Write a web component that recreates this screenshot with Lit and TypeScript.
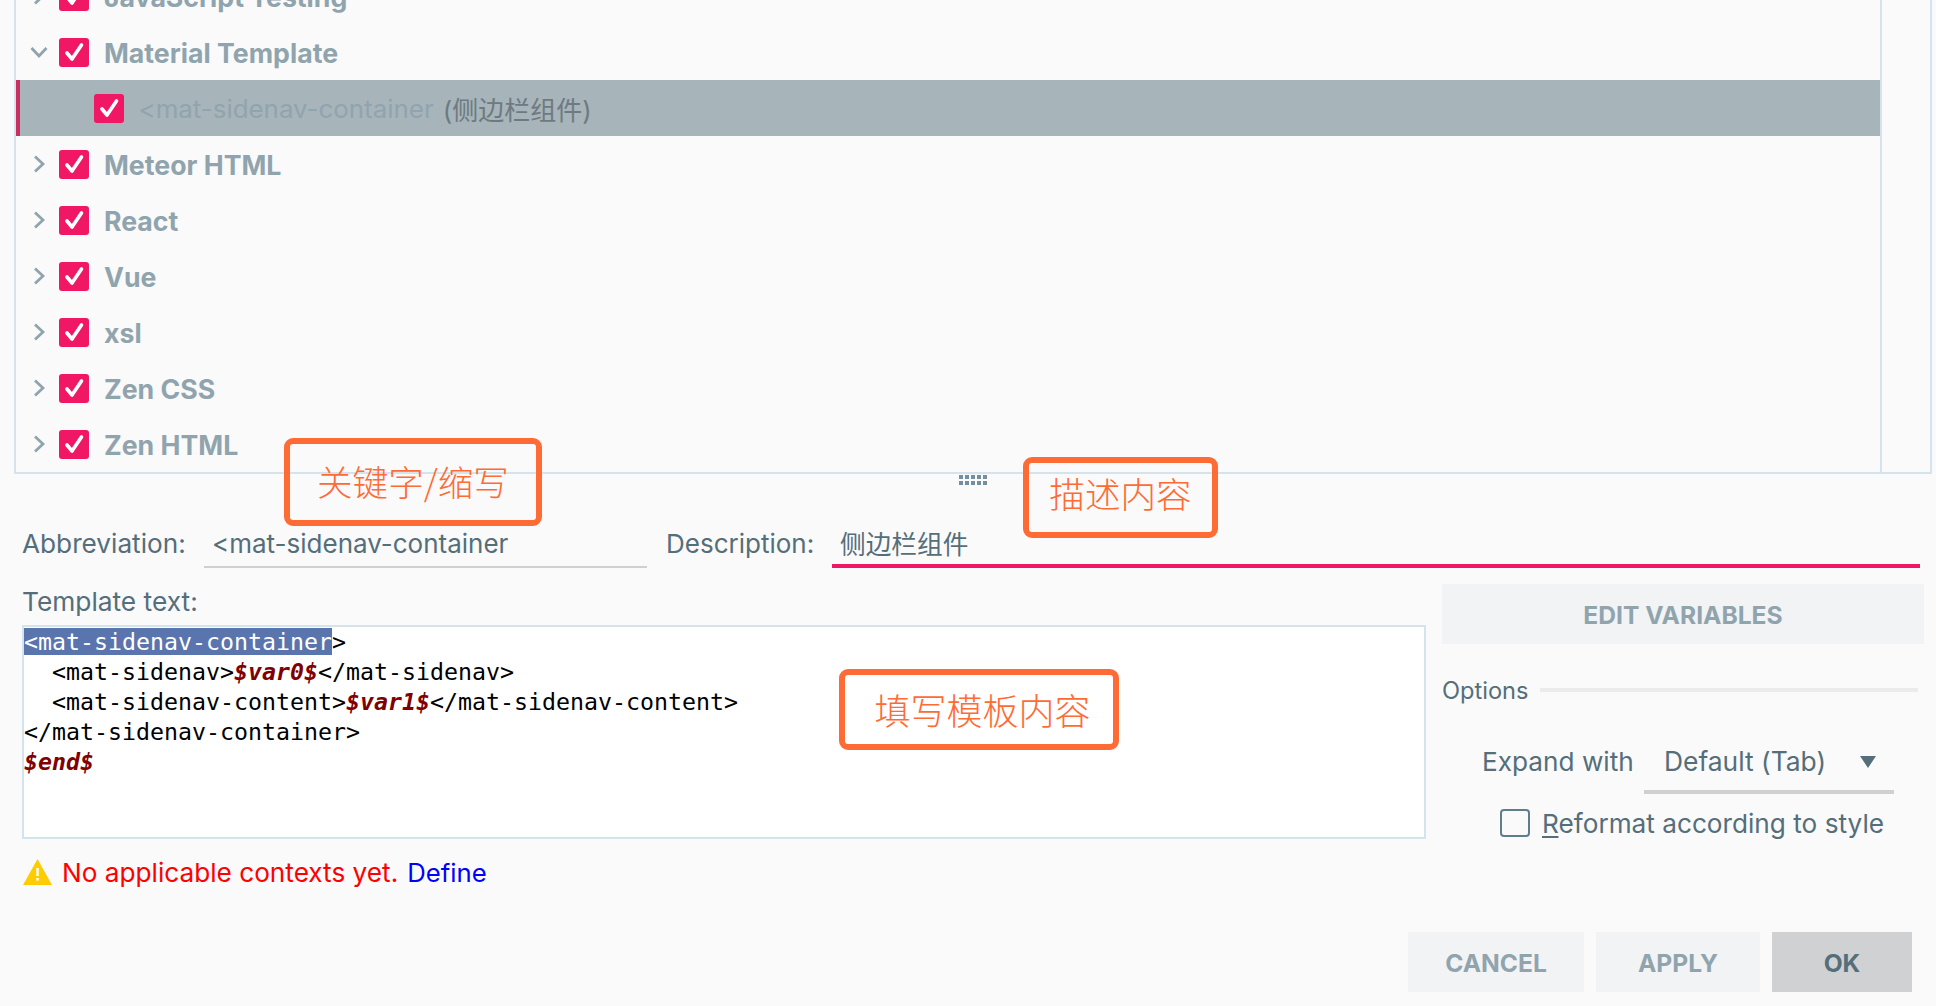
import { LitElement, html, css } from "lit";
import { customElement } from "lit/decorators.js";

const check = html`<svg class="cb" viewBox="0 0 30 29"><rect width="30" height="29" rx="3" fill="#f01864"/><path d="M8 15l5 6 9.5-14" fill="none" stroke="#fff" stroke-width="3.6" stroke-linecap="round" stroke-linejoin="round"/></svg>`;
const right = html`<svg class="chev" viewBox="0 0 18 18"><path d="M5 1.5l8 7.5-8 7.5" fill="none" stroke="#90a4ae" stroke-width="2.8"/></svg>`;
const down = html`<svg class="chev" viewBox="0 0 18 18"><path d="M1.5 5l7.5 8 7.5-8" fill="none" stroke="#90a4ae" stroke-width="2.8"/></svg>`;

const groups: [string, boolean][] = [
  ["JavaScript Testing", false],
  ["Material Template", true],
  ["Meteor HTML", false],
  ["React", false],
  ["Vue", false],
  ["xsl", false],
  ["Zen CSS", false],
  ["Zen HTML", false],
];

@customElement("app-root")
export class AppRoot extends LitElement {
  static styles = css`
    :host { display: block; width: 1936px; height: 1006px; overflow: hidden; }
    .page {
      position: relative; width: 1936px; height: 1006px; background: #fafafa; overflow: hidden;
      display: flex; flex-direction: column; box-sizing: border-box;
      font-family: Inter, "Noto Sans CJK SC", sans-serif; font-size: 26.2px; color: #546e7a;
    }
    .panel {
      flex: none; height: 474px; margin: 0 4px 0 14px; box-sizing: border-box;
      border: solid #d5e3ec; border-width: 0 2px 2px 2px; display: flex;
    }
    .tree {
      flex: 1; min-width: 0; height: 472px; overflow: hidden; display: flex; flex-direction: column;
      justify-content: flex-end; border-right: 2px solid #d5e3ec;
    }
    .row { flex: none; height: 56px; display: flex; align-items: center; padding-left: 14px; box-sizing: border-box; }
    .row .name { font-weight: 700; font-size: 26.7px; color: #90a4ae; margin-left: 15px; white-space: nowrap; padding-top: 1.5px; }
    .chev { width: 18px; height: 18px; flex: none; margin-right: 11px; }
    .cb { width: 30px; height: 29px; flex: none; }
    .sel { background: #a7b4ba; border-left: 4px solid #c9305f; padding-left: 74px; }
    .sel .abbr { color: #90a4ae; margin-left: 14.5px; font-size: 25.9px; white-space: nowrap; }
    .sel .desc { color: #6e7a80; margin-left: 9px; font-size: 26px; white-space: nowrap; }
    .scroll { width: 48px; flex: none; }
    .fields { display: flex; margin: 46px 16px 0 22px; height: 48px; align-items: stretch; flex: none; }
    .fields label { display: flex; align-items: center; white-space: nowrap; padding-bottom: 2px; box-sizing: border-box; }
    .lab1 { width: 182px; }
    .lab2 { width: 166px; margin-left: 19px; font-size: 26px; }
    .field {
      display: flex; align-items: center; box-sizing: border-box; padding: 1px 0 0 8px;
      border-bottom: 2px solid #d0d0d0; white-space: nowrap; font-size: 26px;
    }
    .f1 { width: 443px; }
    .f2 { flex: 1; border-bottom: 4px solid #f01864; font-size: 25.7px; }
    .body { display: flex; margin: 16px 12px 0 22px; flex: none; height: 304px; }
    .left { width: 1404px; flex: none; display: flex; flex-direction: column; }
    .tl { height: 41px; flex: none; display: flex; align-items: center; padding-bottom: 6px; box-sizing: border-box; font-size: 26.3px; }
    .code {
      height: 214px; box-sizing: border-box; flex: none; background: #fff; border: 2px solid #d5e3ec;
      font-family: "DejaVu Sans Mono", monospace; font-size: 23.25px; line-height: 30px; color: #000;
    }
    .code div { height: 30px; white-space: pre; }
    .hl { background: #5a74ad; color: #fff; }
    .v { color: #800000; font-weight: bold; font-style: italic; }
    .warn { display: flex; align-items: center; margin-top: 18px; height: 30px; padding-left: 1px; }
    .warn svg { width: 29px; height: 26px; flex: none; margin-right: 10px; }
    .red { color: #f00; }
    .blue { color: #00f; margin-left: 9px; font-size: 25.7px; }
    .right { width: 482px; margin-left: 16px; flex: none; display: flex; flex-direction: column; }
    .btn {
      display: flex; align-items: center; justify-content: center; background: #f2f3f5; color: #90a4ae;
      font-weight: 700; font-size: 24.6px; height: 60px; box-sizing: border-box; flex: none; padding-top: 2px;
    }
    .opts { display: flex; align-items: center; height: 30px; margin-top: 31px; font-size: 23.6px; }
    .opts i { flex: none; width: 378px; height: 4px; background: #ebebeb; margin-left: auto; margin-right: 6px; }
    .expand { display: flex; align-items: center; margin-top: 23px; padding-left: 40px; height: 66px; }
    .expand .lbl { width: 162px; flex: none; }
    .combo {
      width: 250px; align-self: stretch; box-sizing: border-box; flex: none; display: flex; align-items: center;
      padding: 4px 18px 0 20px; border-bottom: 4px solid #d0d0d0; justify-content: space-between; font-size: 26.4px;
    }
    .combo svg { width: 16px; height: 12px; margin-top: 2px; }
    .reformat { display: flex; align-items: center; margin-top: 14px; padding-left: 58px; height: 30px; white-space: nowrap; }
    .box {
      width: 30px; height: 28px; box-sizing: border-box; border: 2px solid #5f7e8b; border-radius: 4px; margin-right: 12px; flex: none;
    }
    .reformat u { text-decoration-thickness: 2px; text-underline-offset: 3px; }
    .foot { display: flex; justify-content: flex-end; gap: 12px; margin: 44px 24px 0 0; flex: none; }
    .b1 { width: 176px; } .b2 { width: 164px; }
    .foot .ok { width: 140px; background: #d0d1d3; color: #546e7a; }
    .note {
      position: absolute; box-sizing: border-box; border: 6px solid #ff6b35; border-radius: 9px; background: transparent;
      display: flex; align-items: center; justify-content: center; color: #ff6b35; font-size: 36px;
      font-family: "Noto Sans CJK SC", sans-serif; font-weight: 300; white-space: nowrap;
    }
    .n1 { left: 284px; top: 438px; width: 258px; height: 88px; font-size: 35.6px; padding-bottom: 3px; }
    .n2 { left: 1023px; top: 457px; width: 195px; height: 81px; font-size: 35.6px; padding-bottom: 10px; }
    .n3 { left: 839px; top: 669px; width: 280px; height: 81px; padding: 0 0 2px 7px; }
    .grip {
      position: absolute; left: 959px; top: 475px; display: grid; grid-template-columns: repeat(5, 4px);
      grid-auto-rows: 4px; gap: 2px;
    }
    .grip b { background: #7290a0; display: block; }
  `;

  render() {
    return html`<div class="page">
      <div class="panel">
        <div class="tree">
          ${groups.map(([n, open]) => html`
            <div class="row">${open ? down : right}${check}<span class="name">${n}</span></div>
            ${open ? html`<div class="row sel">${check}<span class="abbr">&lt;mat-sidenav-container</span><span class="desc">(侧边栏组件)</span></div>` : ""}
          `)}
        </div>
        <div class="scroll"></div>
      </div>
      <div class="fields">
        <label class="lab1">Abbreviation:</label>
        <div class="field f1">&lt;mat-sidenav-container</div>
        <label class="lab2">Description:</label>
        <div class="field f2">侧边栏组件</div>
      </div>
      <div class="body">
        <div class="left">
          <div class="tl">Template text:</div>
          <div class="code">
            <div><span class="hl">&lt;mat-sidenav-container</span>&gt;</div>
            <div>  &lt;mat-sidenav&gt;<span class="v">$var0$</span>&lt;/mat-sidenav&gt;</div>
            <div>  &lt;mat-sidenav-content&gt;<span class="v">$var1$</span>&lt;/mat-sidenav-content&gt;</div>
            <div>&lt;/mat-sidenav-container&gt;</div>
            <div><span class="v">$end$</span></div>
          </div>
          <div class="warn">
            <svg viewBox="0 0 29 26"><path d="M14.5 0L29 26H0z" fill="#ffcc00"/><rect x="13.3" y="9" width="2.4" height="8" fill="#fff"/><rect x="13.3" y="19" width="2.4" height="2.6" fill="#fff"/></svg>
            <span class="red">No applicable contexts yet.</span><span class="blue">Define</span>
          </div>
        </div>
        <div class="right">
          <div class="btn">EDIT VARIABLES</div>
          <div class="opts"><span>Options</span><i></i></div>
          <div class="expand">
            <span class="lbl">Expand with</span>
            <div class="combo"><span>Default (Tab)</span><svg viewBox="0 0 16 12"><path d="M0 0h16L8 12z" fill="#546e7a"/></svg></div>
          </div>
          <div class="reformat"><span class="box"></span><span><u>R</u>eformat according to style</span></div>
        </div>
      </div>
      <div class="foot">
        <div class="btn b1">CANCEL</div>
        <div class="btn b2">APPLY</div>
        <div class="btn ok">OK</div>
      </div>
      <div class="grip">${Array.from({ length: 10 }, () => html`<b></b>`)}</div>
      <div class="note n1">关键字/缩写</div>
      <div class="note n2">描述内容</div>
      <div class="note n3">填写模板内容</div>
    </div>`;
  }
}
